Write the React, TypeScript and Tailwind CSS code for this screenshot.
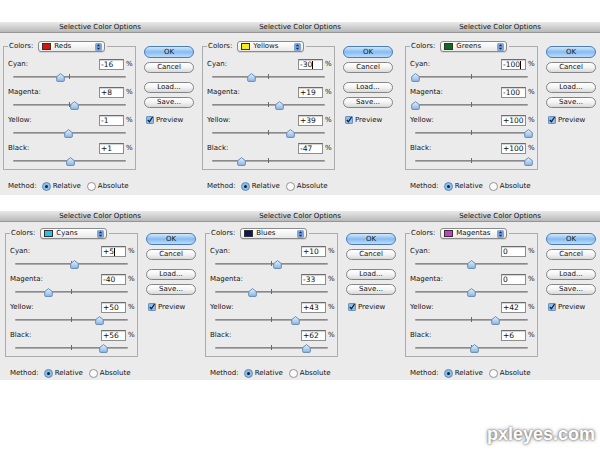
import React from 'react'

type DialogData = {
  name: string
  swatch: string
  values: string[]
  cursor?: number
  dx: number
}

const row1: DialogData[] = [
  { name: 'Reds', swatch: 'bg-[#d5150f]', values: ['-16', '+8', '-1', '+1'], dx: 0 },
  { name: 'Yellows', swatch: 'bg-[#f3ee16]', values: ['-30', '+19', '+39', '-47'], cursor: 0, dx: -1 },
  { name: 'Greens', swatch: 'bg-[#0f6a1c]', values: ['-100', '-100', '+100', '+100'], cursor: 0, dx: 2 },
]

const row2: DialogData[] = [
  { name: 'Cyans', swatch: 'bg-[#25c2e9]', values: ['+5', '-40', '+50', '+56'], cursor: 0, dx: 2 },
  { name: 'Blues', swatch: 'bg-[#0d1560]', values: ['+10', '-33', '+43', '+62'], dx: 2 },
  { name: 'Magentas', swatch: 'bg-[#c93cc5]', values: ['0', '0', '+42', '+6'], dx: 2 },
]

const labels = ['Cyan:', 'Magenta:', 'Yellow:', 'Black:']

function Thumb({ left }: { left: number }) {
  return (
    <svg width="9" height="9" viewBox="0 0 9 9" className="absolute top-[3px]" style={{ left }}>
      <defs>
        <linearGradient id="thumbFill" x1="0" y1="0" x2="0" y2="1">
          <stop offset="0" stopColor="#e4f0fb" />
          <stop offset="1" stopColor="#8db7e4" />
        </linearGradient>
      </defs>
      <path d="M4.5 0.6 L8.3 3.6 L8.3 7.6 Q8.3 8.4 7.5 8.4 L1.5 8.4 Q0.7 8.4 0.7 7.6 L0.7 3.6 Z" fill="url(#thumbFill)" stroke="#5a82b3" strokeWidth="0.9" />
    </svg>
  )
}

function Slider({ value, last }: { value: number; last: boolean }) {
  const pos = ((value + 100) / 200) * 113
  return (
    <div className={`relative ml-[5px] w-[113px] ${last ? 'h-[15px]' : 'h-[17px]'}`}>
      <div className="absolute left-0 right-0 top-[6px] h-[2px] rounded-full bg-gradient-to-b from-[#7a7a7a] to-[#bdbdbd]" />
      <div className="absolute left-[56px] top-[4px] h-[5px] w-px bg-[#6a6a6a]" />
      <Thumb left={pos - 4.5} />
    </div>
  )
}

function ValueRow({ label, value, cursor, last }: { label: string; value: string; cursor: boolean; last: boolean }) {
  return (
    <div>
      <div className="flex h-[11px] items-center">
        <span className="flex-1 text-[7px] text-[#111]">{label}</span>
        <div className="flex h-[11px] w-[25px] items-center overflow-hidden border border-[#8e8e8e] border-t-[#6c6c6c] bg-white pl-[1px] text-[7.5px] text-[#111] shadow-[inset_0_1px_1px_rgba(0,0,0,0.18)]">
          {value}
          {cursor && <span className="inline-block h-[8px] w-px bg-black" />}
        </div>
        <span className="ml-[2px] w-[6px] text-[7px] text-[#111]">%</span>
      </div>
      <Slider value={parseInt(value, 10)} last={last} />
    </div>
  )
}

function Popup({ name, swatch }: { name: string; swatch: string }) {
  return (
    <div className="flex h-[11px] w-[67px] items-center rounded-[3px] border border-[#8a8a8a] bg-gradient-to-b from-white to-[#e9e9e9] pl-[3px] pr-[2px] shadow-[0_1px_0_rgba(0,0,0,0.1)]">
      <span className={`h-[7px] w-[9px] border border-[#333] ${swatch}`} />
      <span className="ml-[3px] flex-1 text-[7px] font-medium text-[#111]">{name}</span>
      <svg width="7" height="8" viewBox="0 0 7 8">
        <rect x="0" y="0" width="7" height="8" rx="1.5" fill="#7ea7de" />
        <path d="M3.5 1.2 L5.3 3.3 L1.7 3.3 Z" fill="#1c2c4c" />
        <path d="M3.5 6.8 L5.3 4.7 L1.7 4.7 Z" fill="#1c2c4c" />
      </svg>
    </div>
  )
}

function Button({ label, primary, tall }: { label: string; primary?: boolean; tall?: boolean }) {
  return (
    <div
      className={`flex w-[50px] items-center justify-center rounded-full border text-[7px] ${tall ? 'h-[12px]' : 'h-[11px]'} ${
        primary
          ? 'border-[#4a7bbb] bg-gradient-to-b from-[#d2e8fc] via-[#86bcf0] to-[#bcdcfa] text-[#0d1a2c]'
          : 'border-[#858585] bg-gradient-to-b from-white via-[#f3f3f3] to-[#d9d9d9] text-[#111]'
      }`}
    >
      {label}
    </div>
  )
}

function Radio({ on }: { on: boolean }) {
  return on ? (
    <svg width="9" height="9" viewBox="0 0 9 9">
      <circle cx="4.5" cy="4.5" r="4" fill="#8fbdea" stroke="#4e78ad" strokeWidth="0.8" />
      <circle cx="4.5" cy="4.5" r="1.5" fill="#142235" />
    </svg>
  ) : (
    <svg width="9" height="9" viewBox="0 0 9 9">
      <circle cx="4.5" cy="4.5" r="4" fill="#fbfbfb" stroke="#7d7d7d" strokeWidth="0.8" />
    </svg>
  )
}

function Dialog({ d, bodyH, padTop }: { d: DialogData; bodyH: string; padTop: string }) {
  return (
    <div className="w-[200px]">
      <div className="h-[11px] border-b border-[#969696] bg-gradient-to-b from-[#e9e9e9] to-[#b9b9b9] text-center text-[7px] leading-[10px] text-[#111]">
        Selective Color Options
      </div>
      <div className={`flex bg-[#ebebeb] ${bodyH} ${padTop}`} style={{ paddingLeft: 3 + d.dx }}>
        <div className="w-[133px]">
          <fieldset className="border border-[#acacac] pl-[4px] pr-[3px] pt-[7px]">
            <legend className="flex items-center gap-[5px] pl-px pr-[2px]">
              <span className="text-[7px] text-[#111]">Colors:</span>
              <Popup name={d.name} swatch={d.swatch} />
            </legend>
            {d.values.map((v, i) => (
              <ValueRow key={i} label={labels[i]} value={v} cursor={d.cursor === i} last={i === 3} />
            ))}
          </fieldset>
          <div className="mt-[10px] flex h-[12px] items-center pl-[5px] text-[7px] text-[#111]">
            <span>Method:</span>
            <span className="ml-[5px]"><Radio on /></span>
            <span className="ml-[2px]">Relative</span>
            <span className="ml-[6px]"><Radio on={false} /></span>
            <span className="ml-[2px]">Absolute</span>
          </div>
        </div>
        <div className="ml-[8px] flex flex-col pt-[5px]">
          <Button label="OK" primary tall />
          <div className="mt-[4px]"><Button label="Cancel" /></div>
          <div className="mt-[9px]"><Button label="Load..." /></div>
          <div className="mt-[4px]"><Button label="Save..." /></div>
          <div className="ml-[2px] mt-[7px] flex items-center gap-[2px]">
            <svg width="8" height="8" viewBox="0 0 8 8">
              <rect x="0.4" y="0.4" width="7.2" height="7.2" rx="1" fill="#8dbbea" stroke="#4c76aa" strokeWidth="0.8" />
              <path d="M1.8 4 L3.4 5.8 L6.6 1" fill="none" stroke="#132034" strokeWidth="1.3" />
            </svg>
            <span className="text-[7px] text-[#111]">Preview</span>
          </div>
        </div>
      </div>
    </div>
  )
}

export default function App() {
  return (
    <div className="h-[450px] w-[600px] overflow-hidden bg-white font-['DejaVu_Sans',sans-serif]">
      <div className="flex pt-[22px]">
        {row1.map((d) => (
          <Dialog key={d.name} d={d} bodyH="h-[162px]" padTop="pt-[8px]" />
        ))}
      </div>
      <div className="mt-[16px] flex">
        {row2.map((d) => (
          <Dialog key={d.name} d={d} bodyH="h-[158px]" padTop="pt-[6px]" />
        ))}
      </div>
      <div className="mt-[44px] flex justify-end pr-[5px]">
        <span className="font-['Liberation_Sans',Arial,sans-serif] text-[18px] font-bold leading-[20px] text-white [text-shadow:0_0_2px_#555,0_0_4px_#888]">
          pxleyes.com
        </span>
      </div>
    </div>
  )
}
